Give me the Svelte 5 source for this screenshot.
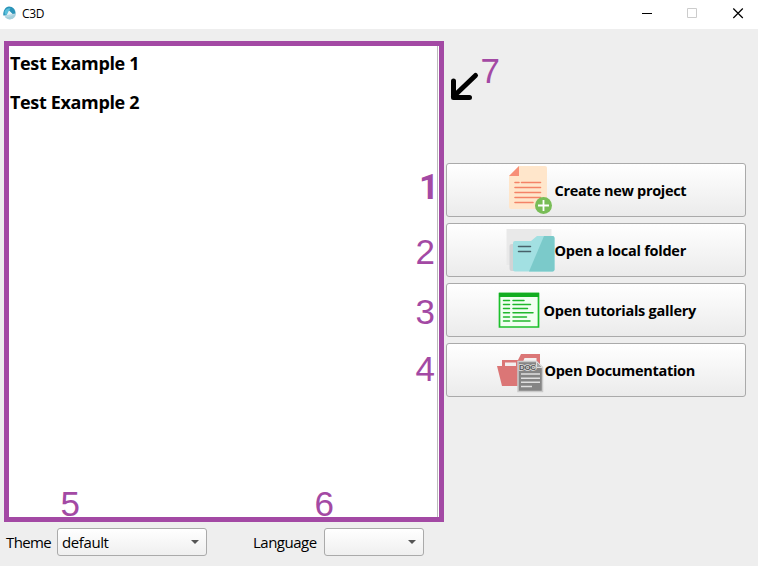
<script>
  const projects = ['Test Example 1', 'Test Example 2'];
  const notes = [
    { n: '1', x: 419, y: 169, bold: true },
    { n: '2', x: 415.5, y: 233 },
    { n: '3', x: 415.5, y: 293 },
    { n: '4', x: 415.5, y: 350 },
    { n: '5', x: 60.5, y: 485 },
    { n: '6', x: 314.5, y: 485 },
    { n: '7', x: 480.5, y: 52 }
  ];
</script>

<div class="window">
  <header>
    <svg class="logo" width="14" height="14" viewBox="0 0 14 14">
      <circle cx="7" cy="7.200" r="6" fill="#b9d9e4" />
      <path d="M.3 9.500C0 4.500 2.500.8 6 .6c4 0 6.500 3.200 6.300 7L9.500 8 6 4.600 3.800 9z" fill="#2a93b8" />
      <path d="M1.500 5.500C3 2.500 5.500 2 7.500 2.500L6 4.600 3.800 9l-2-.5z" fill="#59bfdb" />
      <path d="M3.800 9 6 4.600 9.500 8z" fill="#eaf5f8" />
      <path d="M2 11c3 .5 7-.5 10.500-3-.5 6-7.500 7-10.500 3z" fill="#a3cfdc" />
    </svg>
    <span class="title">C3D</span>
    <svg class="controls" width="103" height="12" viewBox="0 0 103 12">
      <path d="M0 5.500h10" stroke="#000" />
      <path d="M45.500 .5h9v9h-9z" fill="none" stroke="#ccc" />
      <path d="M91.300 .5l9.500 9.500M100.800 .5L91.300 10" stroke="#000" stroke-width="1.200" />
    </svg>
  </header>

  <main>
    <section class="left">
      <div class="list">
        {#each projects as project}
          <div class="item">{project}</div>
        {/each}
      </div>
      <div class="settings">
        <span class="label theme">Theme</span>
        <div class="combo wide"><span>default</span><i></i></div>
        <span class="label language">Language</span>
        <div class="combo"><span></span><i></i></div>
      </div>
    </section>

    <section class="actions">
      <button>
        <svg width="49" height="50" viewBox="1 0 49 50">
          <path d="M14 1h26a2 2 0 0 1 2 2v39a2 2 0 0 1-2 2H6a2 2 0 0 1-2-2V11z" fill="#ffe6cb" />
          <path d="M14 1v10H4z" fill="#f78f78" />
          <path d="M10 17.500h4M16.500 17.500h19M10 22.500h25.500M10 27.500h25.500M10 32.500h25.500M10 37.500h18" stroke="#f48367" stroke-width="1.600" stroke-linecap="round" />
          <circle cx="38.500" cy="40.500" r="8.500" fill="#79bd57" />
          <path d="M33 40.500h11M38.500 35v11" stroke="#fff" stroke-width="1.800" />
        </svg>
        <span class="t1">Create new project</span>
      </button>
      <button>
        <svg width="49" height="50" viewBox="0 0 49 50">
          <path d="M.5 4h45v36h-45z" fill="#e9e9e9" />
          <path d="M3.500 21q0-2 2-2h5v27h-5q-2 0-2-3z" fill="#d2d3d5" />
          <path d="M7 18q0-2 2-2h16l6-5h15.500q2 0 2 2v31.500q0 2-2 2H9q-2 0-2-2z" fill="#a2e0e2" />
          <path d="M38 11h8.500q2 0 2 2v31.500q0 2-2 2H23z" fill="#7bcaca" />
          <path d="M12.500 21.500h12M12.500 26.500h12" stroke="#47616a" stroke-width="1.500" stroke-linecap="round" />
        </svg>
        <span class="t2">Open a local folder</span>
      </button>
      <button>
        <svg width="48" height="50" viewBox="1 0 48 50">
          <path d="M4.500 8.500h39v33.500h-39z" fill="#f2fff2" stroke="#1cc12b" stroke-width="1.700" />
          <path d="M4 7.700h40V12H4z" fill="#12ad20" />
          <path d="M8.500 15.500h6M18 15.500h11M8.500 19.500h6M18 19.500h17.500M8.500 23.500h6M18 23.500h14.500M8.500 27.700h6M18 27.700h20M8.500 31.900h6M18 31.900h13.500M8.500 36h6M18 36h17" stroke="#20b82c" stroke-width="1.500" stroke-linecap="round" />
        </svg>
        <span class="t3">Open tutorials gallery</span>
      </button>
      <button>
        <svg width="48" height="50" viewBox="0 0 48 50">
          <path d="M0 21h5v-6h16l3-6h19v13h-5v19H5z" fill="#db7676" />
          <path d="M8 17.500h11V21H8zM27.500 13h12v5h-14z" fill="#f3efef" />
          <path d="M21 16.500h18.500l6 6v24H21z" fill="#858585" stroke="#cacaca" stroke-width="1.500" />
          <path d="M39.500 16.500v6h6z" fill="#a5a5a5" stroke="#ddd" />
          <path d="M24 29h19M24 33.200h19M24 37.300h19M24 41.500h11" stroke="#e0e0e0" stroke-width="1.500" />
          <text x="22" y="25.200" class="doc">DOC</text>
        </svg>
        <span class="t4">Open Documentation</span>
      </button>
    </section>
  </main>

  {#each notes as note}
    <span class="note" class:bold={note.bold} style:left="{note.x}px" style:top="{note.y}px">{note.n}</span>
  {/each}
  <svg class="arrow" width="32" height="34" viewBox="0 0 32 34">
    <path d="M26.500 5.500 4.500 26.500M4.500 11v16.500h16" fill="none" stroke="#000" stroke-width="5" stroke-linecap="round" stroke-linejoin="round" />
  </svg>
</div>

<style>
  :global(body) { margin: 0; background: #fff; }
  .window {
    position: relative; box-sizing: border-box; width: 758px; height: 566px;
    background: #eee; color: #000; font-family: "Open Sans", "Noto Sans", sans-serif;
  }
  header { display: flex; height: 29px; background: #fff; padding-left: 3px; }
  .logo { margin-top: 6px; }
  .title { margin-left: 5px; font-size: 12px; line-height: 27px; letter-spacing: -0.3px; flex: 1; }
  .controls { margin: 8px 13px 0 0; }
  main { display: flex; padding: 12px 0 0 4px; }
  .left { width: 440px; }
  .list {
    position: relative; box-sizing: border-box; width: 440px; height: 481px;
    border: 5px solid #a349a4; background: #fff; padding: 0 1px;
  }
  .list::after { content: ""; position: absolute; top: 0; right: 1px; bottom: 0; width: 1px; background: #bbb; }
  .item { height: 39px; line-height: 35px; font-size: 18px; font-weight: 700; letter-spacing: -0.35px; white-space: nowrap; }
  .settings { display: flex; align-items: center; height: 28px; margin-top: 6px; }
  .label { font-size: 15px; white-space: nowrap; }
  .theme { box-sizing: border-box; width: 53px; padding-left: 2px; letter-spacing: -0.6px; }
  .language { width: 71px; margin-left: 46px; letter-spacing: -0.5px; }
  .combo {
    display: flex; align-items: center; justify-content: space-between; box-sizing: border-box;
    width: 100px; height: 28px; padding: 0 7px 0 4px; border: 1px solid #aaa; border-radius: 3px;
    background: linear-gradient(#fff, #efefef); font-size: 15px; letter-spacing: -0.4px;
  }
  .wide { width: 150px; }
  .combo span { line-height: 27px; }
  .combo i { width: 0; height: 0; border: 4px solid transparent; border-top: 4px solid #555; border-bottom: 0; }
  .actions { display: flex; flex-direction: column; gap: 6px; margin: 122px 0 0 2px; }
  button {
    display: flex; align-items: center; justify-content: center; box-sizing: border-box;
    width: 300px; height: 54px; padding: 0; border: 1px solid #aaa; border-radius: 3px;
    background: linear-gradient(#fff, #ebebeb); color: #000; font: 700 14.500px "Open Sans", "Noto Sans", sans-serif;
  }
  button svg { flex: none; }
  button span { white-space: nowrap; text-align: left; }
  .t1 { width: 132px; letter-spacing: -0.32px; }
  .t2 { width: 132px; letter-spacing: -0.25px; }
  .t3 { width: 153px; letter-spacing: -0.25px; }
  .t4 { width: 151px; letter-spacing: -0.3px; }
  .doc { font: 700 8px "Liberation Sans", sans-serif; fill: #555; stroke: #ddd; stroke-width: 1.500px; paint-order: stroke; letter-spacing: -0.4px; }
  .note {
    position: absolute; font: 400 35px/38px "Liberation Sans", Arial, sans-serif; color: #a349a4;
  }
  .note.bold { font-family: Roboto, sans-serif; font-weight: 700; }
  .arrow { position: absolute; left: 448.500px; top: 70px; }
</style>
